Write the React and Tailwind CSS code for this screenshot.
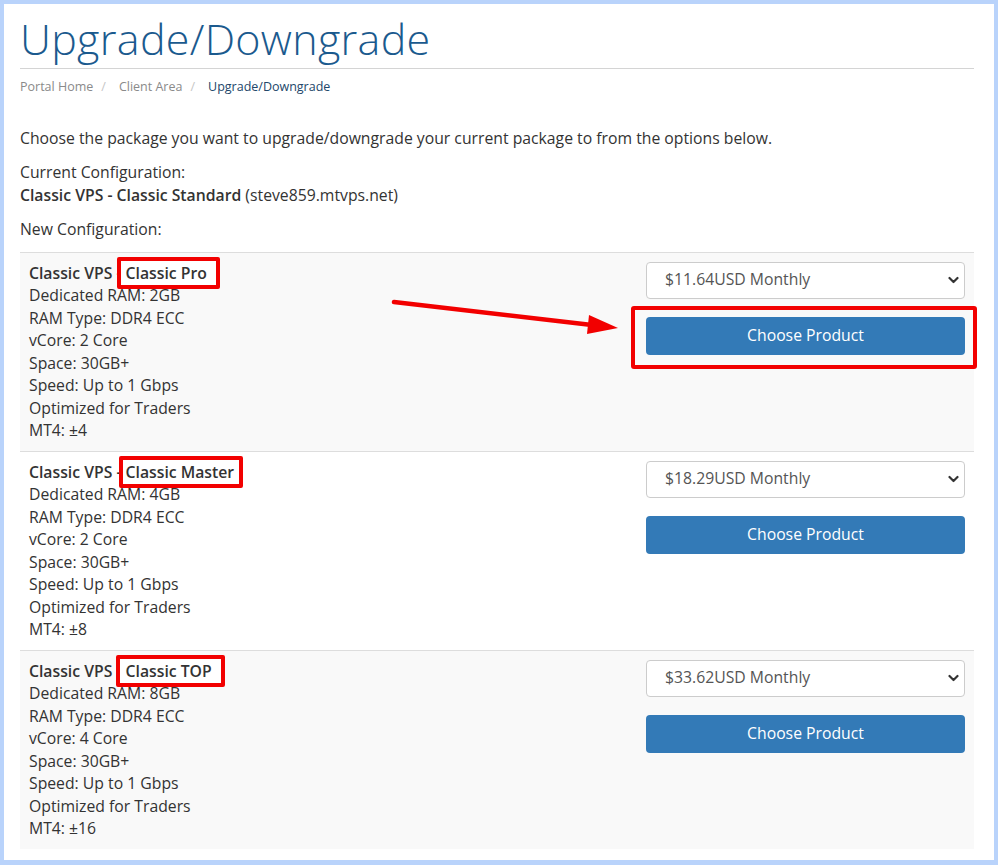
import React from "react";

const plans = [
  {
    name: "Classic Pro",
    price: "$11.64USD Monthly",
    box: "-left-[9px] -right-[13px]",
    specs: ["Dedicated RAM: 2GB", "RAM Type: DDR4 ECC", "vCore: 2 Core", "Space: 30GB+", "Speed: Up to 1 Gbps", "Optimized for Traders", "MT4: ±4"],
    highlight: true,
  },
  {
    name: "Classic Master",
    price: "$18.29USD Monthly",
    box: "-left-[7px] -right-[9px]",
    specs: ["Dedicated RAM: 4GB", "RAM Type: DDR4 ECC", "vCore: 2 Core", "Space: 30GB+", "Speed: Up to 1 Gbps", "Optimized for Traders", "MT4: ±8"],
  },
  {
    name: "Classic TOP",
    price: "$33.62USD Monthly",
    box: "-left-[10px] -right-[13px]",
    specs: ["Dedicated RAM: 8GB", "RAM Type: DDR4 ECC", "vCore: 4 Core", "Space: 30GB+", "Speed: Up to 1 Gbps", "Optimized for Traders", "MT4: ±16"],
  },
];

const Chevron = () => (
  <svg className="absolute right-[6px] top-1/2 -translate-y-1/2 pointer-events-none" width="11" height="8" viewBox="0 0 11 8">
    <path d="M1.5 2 L5.5 6 L9.5 2" fill="none" stroke="#333" strokeWidth="2.2" strokeLinecap="round" strokeLinejoin="round" />
  </svg>
);

const PlanRow = ({ plan, striped }) => (
  <div className={`flex border-t border-[#dddddd] ${striped ? "bg-[#f9f9f9]" : "bg-white"}`}>
    <div className="flex-1 px-[9px] py-[9px] text-[15.75px] leading-[22.5px] text-[#333]">
      <div>
        <strong className="font-semibold">Classic VPS - </strong>
        <span className="relative font-semibold">
          {/* red annotation box */}
          <span className={`absolute ${plan.box} -top-[5px] -bottom-[5px] bg-white border-4 border-[#f20000] rounded-[2px]`} />
          <span className="relative">{plan.name}</span>
        </span>
      </div>
      {plan.specs.map((s) => (
        <div key={s}>{s}</div>
      ))}
    </div>
    <div className="w-[337px] px-[9px] py-[9px]">
      <div className="relative">
        <select
          defaultValue={plan.price}
          className="w-full h-[37px] appearance-none rounded bg-white border border-[#cccccc] pl-[18px] pr-8 text-[15.75px] text-[#555] outline-none"
        >
          <option>{plan.price}</option>
        </select>
        <Chevron />
      </div>
      <div className="relative mt-[18px]">
        {plan.highlight && (
          <div className="absolute -left-[15px] -right-[12px] -top-[11px] -bottom-[14px] border-4 border-[#f20000] rounded-[3px]" />
        )}
        <button className="relative w-full h-[38px] rounded bg-[#337ab7] text-white text-[15.75px]">Choose Product</button>
      </div>
    </div>
  </div>
);

export default function App() {
  return (
    <div className="relative w-[998px] h-[865px] font-['Open_Sans',sans-serif]">
      <div className="h-full border-t-4 border-l-4 border-r-4 border-b-[5px] border-[#b9d3fb] bg-white pl-4 pr-5">
        <h1 className="pt-[10px] text-[43px] leading-[50px] font-light text-[#1b5a8e] tracking-[0.3px]">Upgrade/Downgrade</h1>
        <div className="mt-[4px] border-t border-[#d4d4d4]" />
        <div className="mt-[9px] flex text-[12.5px] leading-[18px]">
          <span className="text-[#8a8a8a]">Portal Home</span>
          <span className="ml-[8px] mr-[13px] text-[#c6c6c6]">/</span>
          <span className="text-[#8a8a8a]">Client Area</span>
          <span className="ml-[8px] mr-[13px] text-[#c6c6c6]">/</span>
          <span className="text-[#23476a]">Upgrade/Downgrade</span>
        </div>

        <div className="mt-[31px] text-[15.75px] leading-[22.5px] text-[#333]">
          <p className="mb-[11.5px]">Choose the package you want to upgrade/downgrade your current package to from the options below.</p>
          <p className="mb-[11.5px]">
            Current Configuration:
            <br />
            <strong className="font-semibold">Classic VPS - Classic Standard</strong> (steve859.mtvps.net)
          </p>
          <p className="mb-[11.5px]">New Configuration:</p>
        </div>

        <div>
          {plans.map((p, i) => (
            <PlanRow key={p.name} plan={p} striped={i % 2 === 0} />
          ))}
        </div>
      </div>

      {/* arrow annotation */}
      <svg className="absolute inset-0 pointer-events-none" width="998" height="865">
        <line x1="394" y1="302" x2="592" y2="325" stroke="#f20000" strokeWidth="4.5" strokeLinecap="round" />
        <polygon points="618,328 587,334 589,315" fill="#f20000" />
      </svg>
    </div>
  );
}
